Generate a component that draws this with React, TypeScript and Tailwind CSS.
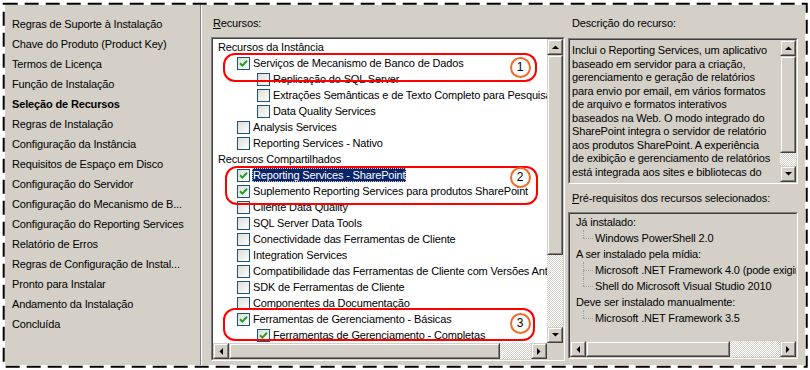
import React from "react";

const FONT = { fontFamily: '"Liberation Sans", Arial, sans-serif' };

const navItems = [
  "Regras de Suporte à Instalação",
  "Chave do Produto (Product Key)",
  "Termos de Licença",
  "Função de Instalação",
  "Seleção de Recursos",
  "Regras de Instalação",
  "Configuração da Instância",
  "Requisitos de Espaço em Disco",
  "Configuração do Servidor",
  "Configuração do Mecanismo de B...",
  "Configuração do Reporting Services",
  "Relatório de Erros",
  "Regras de Configuração de Instal...",
  "Pronto para Instalar",
  "Andamento da Instalação",
  "Concluída",
];

type Row =
  | { kind: "h"; text: string }
  | { kind: "c"; level: 1 | 2; checked?: boolean; selected?: boolean; text: string };

const rows: Row[] = [
  { kind: "h", text: "Recursos da Instância" },
  { kind: "c", level: 1, checked: true, text: "Serviços de Mecanismo de Banco de Dados" },
  { kind: "c", level: 2, text: "Replicação do SQL Server" },
  { kind: "c", level: 2, text: "Extrações Semânticas e de Texto Completo para Pesquisa" },
  { kind: "c", level: 2, text: "Data Quality Services" },
  { kind: "c", level: 1, text: "Analysis Services" },
  { kind: "c", level: 1, text: "Reporting Services - Nativo" },
  { kind: "h", text: "Recursos Compartilhados" },
  { kind: "c", level: 1, checked: true, selected: true, text: "Reporting Services - SharePoint" },
  { kind: "c", level: 1, checked: true, text: "Suplemento Reporting Services para produtos SharePoint" },
  { kind: "c", level: 1, text: "Cliente Data Quality" },
  { kind: "c", level: 1, text: "SQL Server Data Tools" },
  { kind: "c", level: 1, text: "Conectividade das Ferramentas de Cliente" },
  { kind: "c", level: 1, text: "Integration Services" },
  { kind: "c", level: 1, text: "Compatibilidade das Ferramentas de Cliente com Versões Anteriores" },
  { kind: "c", level: 1, text: "SDK de Ferramentas de Cliente" },
  { kind: "c", level: 1, text: "Componentes da Documentação" },
  { kind: "c", level: 1, checked: true, text: "Ferramentas de Gerenciamento - Básicas" },
  { kind: "c", level: 2, checked: true, text: "Ferramentas de Gerenciamento - Completas" },
];

const descLines = [
  "Inclui o Reporting Services, um aplicativo",
  "baseado em servidor para a criação,",
  "gerenciamento e geração de relatórios",
  "para envio por email, em vários formatos",
  "de arquivo e formatos interativos",
  "baseados na Web. O modo integrado do",
  "SharePoint integra o servidor de relatório",
  "aos produtos SharePoint. A experiência",
  "de exibição e gerenciamento de relatórios",
  "está integrada aos sites e bibliotecas do",
];

function Arrow({ dir }: { dir: "up" | "down" | "left" | "right" }) {
  const pts: Record<string, string> = {
    up: "0,4 7,4 3.5,0.5",
    down: "0,0 7,0 3.5,3.5",
    left: "4,0 4,7 0.5,3.5",
    right: "0,0 0,7 3.5,3.5",
  };
  const vertical = dir === "up" || dir === "down";
  return (
    <svg width={vertical ? 7 : 4} height={vertical ? 4 : 7} viewBox={vertical ? "0 0 7 4" : "0 0 4 7"}>
      <polygon points={pts[dir]} fill="#000" />
    </svg>
  );
}

function Raised({ className = "", children }: { className?: string; children?: React.ReactNode }) {
  return (
    <div
      className={
        "box-border border border-t-[#d4d0c8] border-l-[#d4d0c8] border-r-[#404040] border-b-[#404040] bg-[#d4d0c8] " +
        className
      }
    >
      <div className="w-full h-full border border-t-white border-l-white border-r-[#808080] border-b-[#808080] flex items-center justify-center box-border">
        {children}
      </div>
    </div>
  );
}

function Checker({ className = "" }: { className?: string }) {
  return (
    <div
      className={
        "bg-[image:repeating-conic-gradient(#ffffff_0_25%,#d4d0c8_0_50%)] bg-[length:2px_2px] " + className
      }
    />
  );
}

function Sunken({ className = "", innerClass = "", children }: { className?: string; innerClass?: string; children?: React.ReactNode }) {
  return (
    <div className={"box-border border border-t-[#808080] border-l-[#808080] border-r-white border-b-white " + className}>
      <div className={"w-full h-full box-border border border-t-[#404040] border-l-[#404040] border-r-[#d4d0c8] border-b-[#d4d0c8] " + innerClass}>
        {children}
      </div>
    </div>
  );
}

function Checkbox({ checked }: { checked?: boolean }) {
  return (
    <span className="w-[13px] h-[13px] shrink-0 box-border border border-[#1c5180] bg-linear-to-br from-[#dcdcd7] to-white flex items-center justify-center">
      {checked && (
        <svg width="9" height="9" viewBox="0 0 9 9">
          <path d="M1 4.2 L3.4 6.6 L8 1.8" stroke="#21a121" strokeWidth="2" fill="none" />
        </svg>
      )}
    </span>
  );
}

function Callout({ left, top, w, h, n, cx, cy }: { left: number; top: number; w: number; h: number; n: string; cx: number; cy: number }) {
  return (
    <>
      <div
        className="absolute box-border border-2 border-[#ff0000] rounded-[12px] pointer-events-none"
        style={{ left, top, width: w, height: h }}
      />
      <div
        className="absolute box-border border-2 border-[#ef6b2c] rounded-full w-[21px] h-[21px] flex items-center justify-center text-[12px] text-black leading-none tracking-normal"
        style={{ left: cx - 10.5, top: cy - 10.5 }}
      >
        {n}
      </div>
    </>
  );
}

function PrereqChild({ text, last }: { text: string; last?: boolean }) {
  return (
    <div className="relative h-[16px] leading-[16px] pl-[19px] whitespace-nowrap">
      <span className={"absolute left-[7px] top-0 border-l border-dotted border-[#a0a0a0] " + (last ? "h-[8px]" : "h-[16px]")} />
      <span className="absolute left-[7px] top-[8px] w-[10px] border-t border-dotted border-[#a0a0a0]" />
      {text}
    </div>
  );
}

export default function App() {
  return (
    <div className="relative w-[810px] h-[370px] bg-white overflow-hidden text-[11px] tracking-[-0.15px] text-black" style={FONT}>
      <div className="absolute left-[5px] top-[5px] w-[800px] h-[360px] bg-[#d4d0c8] flex">
        {/* Left nav */}
        <div className="w-[196px] h-full border-r border-[#808080] pt-[9px] pl-[7px] box-border">
          {navItems.map((t) => (
            <div key={t} className={"h-[20px] leading-[20px] whitespace-nowrap " + (t === "Seleção de Recursos" ? "font-bold" : "")}>
              {t}
            </div>
          ))}
        </div>
        <div className="w-px h-full bg-white" />

        {/* Middle */}
        <div className="w-[363px] pl-[9px] pt-[11px] box-border">
          <div className="h-[14px] leading-[14px] pl-[2px]">
            <span className="underline">R</span>ecursos:
          </div>
          <Sunken className="mt-[7px] w-[354px] h-[324px]" innerClass="bg-white">
            <div className="grid grid-cols-[334px_16px] grid-rows-[304px_16px]">
              <div className="overflow-hidden">
                {rows.map((r, i) =>
                  r.kind === "h" ? (
                    <div key={i} className="h-[16px] leading-[16px] pl-[5px] whitespace-nowrap">
                      {r.text}
                    </div>
                  ) : (
                    <div
                      key={i}
                      className={"h-[16px] flex items-center whitespace-nowrap " + (r.level === 1 ? "pl-[24px]" : "pl-[44px]")}
                    >
                      <Checkbox checked={r.checked} />
                      <span
                        className={
                          "ml-[2px] px-px h-[14px] leading-[14px] " +
                          (r.selected ? "bg-[#0a246a] text-white outline-1 outline-dotted outline-[#d4d0c8] -outline-offset-1" : "")
                        }
                      >
                        {r.text}
                      </span>
                    </div>
                  )
                )}
              </div>
              {/* vertical scrollbar */}
              <div className="flex flex-col">
                <Raised className="w-[16px] h-[16px]">
                  <Arrow dir="up" />
                </Raised>
                <Raised className="w-[16px] h-[200px]" />
                <Checker className="w-[16px] flex-1" />
                <Raised className="w-[16px] h-[16px]">
                  <Arrow dir="down" />
                </Raised>
              </div>
              {/* horizontal scrollbar */}
              <div className="flex">
                <Raised className="w-[16px] h-[16px]">
                  <Arrow dir="left" />
                </Raised>
                <Raised className="w-[271px] h-[16px]" />
                <Checker className="flex-1 h-[16px]" />
                <Raised className="w-[16px] h-[16px]">
                  <Arrow dir="right" />
                </Raised>
              </div>
              <div className="bg-[#d4d0c8]" />
            </div>
          </Sunken>
        </div>

        {/* Right */}
        <div className="w-[233px] pl-[3px] pt-[11px] box-border">
          <div className="h-[14px] leading-[14px] pl-[4px]">Descrição do recurso:</div>
          <Sunken className="mt-[8px] w-[230px] h-[146px]" innerClass="flex">
            <div className="flex-1 overflow-hidden pt-[4px] pl-[2px]">
              {descLines.map((l) => (
                <div key={l} className="h-[13.5px] leading-[13.5px] whitespace-nowrap">
                  {l}
                </div>
              ))}
            </div>
            <div className="w-[16px] flex flex-col">
              <Raised className="w-[16px] h-[16px]">
                <Arrow dir="up" />
              </Raised>
              <Raised className="w-[16px] h-[97px]" />
              <Checker className="w-[16px] flex-1" />
              <Raised className="w-[16px] h-[16px]">
                <Arrow dir="down" />
              </Raised>
            </div>
          </Sunken>
          <div className="mt-[7px] h-[14px] leading-[14px] pl-[4px]">
            <span className="underline">P</span>ré-requisitos dos recursos selecionados:
          </div>
          <Sunken className="mt-[7px] w-[230px] h-[147px]" innerClass="flex flex-col">
            <div className="flex-1 overflow-hidden pl-[6px]">
              <div className="h-[16px] leading-[16px]">Já instalado:</div>
              <PrereqChild text="Windows PowerShell 2.0" last />
              <div className="h-[16px] leading-[16px]">A ser instalado pela mídia:</div>
              <PrereqChild text="Microsoft .NET Framework 4.0 (pode exigir reinicialização)" />
              <PrereqChild text="Shell do Microsoft Visual Studio 2010" last />
              <div className="h-[16px] leading-[16px]">Deve ser instalado manualmente:</div>
              <PrereqChild text="Microsoft .NET Framework 3.5" last />
            </div>
            <div className="flex h-[16px]">
              <Raised className="w-[16px] h-[16px]">
                <Arrow dir="left" />
              </Raised>
              <Raised className="w-[144px] h-[16px]" />
              <Checker className="flex-1 h-[16px]" />
              <Raised className="w-[16px] h-[16px]">
                <Arrow dir="right" />
              </Raised>
            </div>
          </Sunken>
        </div>
      </div>

      {/* annotations */}
      <Callout left={223} top={53} w={314} h={29} n="1" cx={520} cy={67} />
      <Callout left={225} top={166} w={313} h={39} n="2" cx={520} cy={177} />
      <Callout left={223} top={308} w={312} h={33} n="3" cx={520} cy={323} />

      {/* dashed torn edge */}
      <svg className="absolute inset-0 pointer-events-none" width="810" height="370">
        <rect x="3.7" y="3.7" width="803" height="363" fill="none" stroke="#000" strokeWidth="2" strokeDasharray="14 7" />
      </svg>
    </div>
  );
}
